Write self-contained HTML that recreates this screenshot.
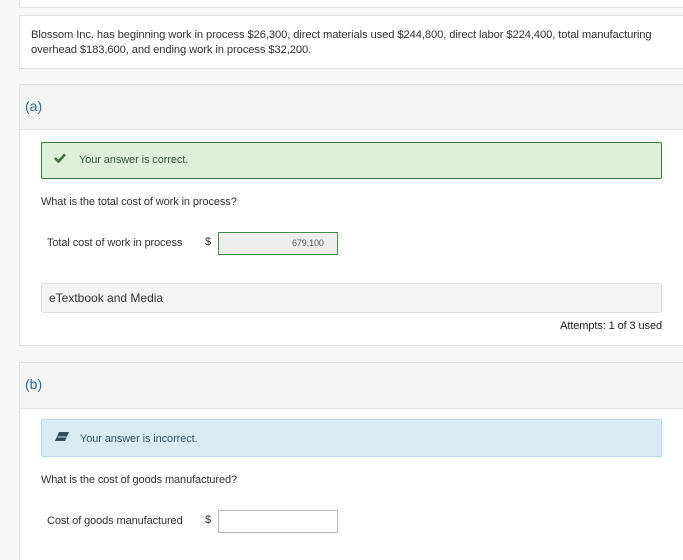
<!DOCTYPE html>
<html style="overflow:hidden;height:560px"><head><style>
body{margin:0;width:683px;height:560px;overflow:hidden;background:#f8f8f8;font-family:"Liberation Sans",sans-serif;color:#333;position:relative}
.a{position:absolute}
.card{position:absolute;left:19px;width:680px;background:#fff;border:1px solid #e2e2e2;box-sizing:border-box}
.t{font-size:11px;white-space:nowrap;letter-spacing:-0.1px}
</style></head><body>
<div class="card" style="top:-2px;height:10px"></div>
<div class="card" style="top:15px;height:54px"></div>
<div class="a t" style="left:31px;top:28px;line-height:15px;font-size:11.2px;letter-spacing:-0.1px">Blossom Inc. has beginning work in process $26,300, direct materials used $244,800, direct labor $224,400, total manufacturing<br>overhead $183,600, and ending work in process $32,200.</div>

<div class="card" style="top:84px;height:262px"></div>
<div class="a" style="left:20px;top:85px;width:670px;height:44px;background:#f4f4f4;border-bottom:1px solid #e2e2e2"></div>
<div class="a" style="left:25px;top:98px;font-size:14px;color:#2a6f9e">(a)</div>
<div class="a" style="left:41px;top:142px;width:621px;height:37px;background:#dff0d8;border:1px solid #3c7a3c;box-sizing:border-box;border-radius:2px"></div>
<svg class="a" style="left:54px;top:153px" width="12" height="10" viewBox="0 0 12 10"><path d="M1 5 L4.5 8.5 L11 1.5" stroke="#3c763d" stroke-width="2.6" fill="none"/></svg>
<div class="a t" style="left:79px;top:154px;color:#3c5a3c">Your answer is correct.</div>
<div class="a t" style="left:41px;top:196px">What is the total cost of work in process?</div>
<div class="a t" style="left:47px;top:237px">Total cost of work in process</div>
<div class="a t" style="left:205px;top:236px">$</div>
<div class="a" style="left:218px;top:232px;width:120px;height:23px;background:#eee;border:1px solid #4a8a4a;box-sizing:border-box"></div>
<div class="a t" style="left:292px;top:238px;font-size:9px;color:#555">679,100</div>
<div class="a" style="left:41px;top:283px;width:621px;height:30px;background:#f4f4f4;border:1px solid #e0e0e0;box-sizing:border-box;border-radius:2px"></div>
<div class="a" style="left:49px;top:291px;font-size:12px;color:#333">eTextbook and Media</div>
<div class="a t" style="right:21px;top:320px;color:#222">Attempts: 1 of 3 used</div>

<div class="card" style="top:362px;height:198px;border-bottom:none"></div>
<div class="a" style="left:20px;top:363px;width:670px;height:45px;background:#f4f4f4;border-bottom:1px solid #e2e2e2"></div>
<div class="a" style="left:25px;top:376px;font-size:14px;color:#2a6f9e">(b)</div>
<div class="a" style="left:41px;top:419px;width:621px;height:38px;background:#d9ecf5;border:1px solid #b5dced;box-sizing:border-box;border-radius:2px"></div>
<svg class="a" style="left:55px;top:432px" width="14" height="9" viewBox="0 0 14 9"><path d="M4 0 H14 L10 9 H0 Z" fill="#2f4d5e"/><path d="M2.5 5 H11.5" stroke="#fff" stroke-width="0.8"/></svg>
<div class="a t" style="left:80px;top:433px;color:#3a5566">Your answer is incorrect.</div>
<div class="a t" style="left:41px;top:474px">What is the cost of goods manufactured?</div>
<div class="a t" style="left:47px;top:515px">Cost of goods manufactured</div>
<div class="a t" style="left:205px;top:514px">$</div>
<div class="a" style="left:218px;top:510px;width:120px;height:23px;background:#fff;border:1px solid #bbb;box-sizing:border-box"></div>
</body></html>
